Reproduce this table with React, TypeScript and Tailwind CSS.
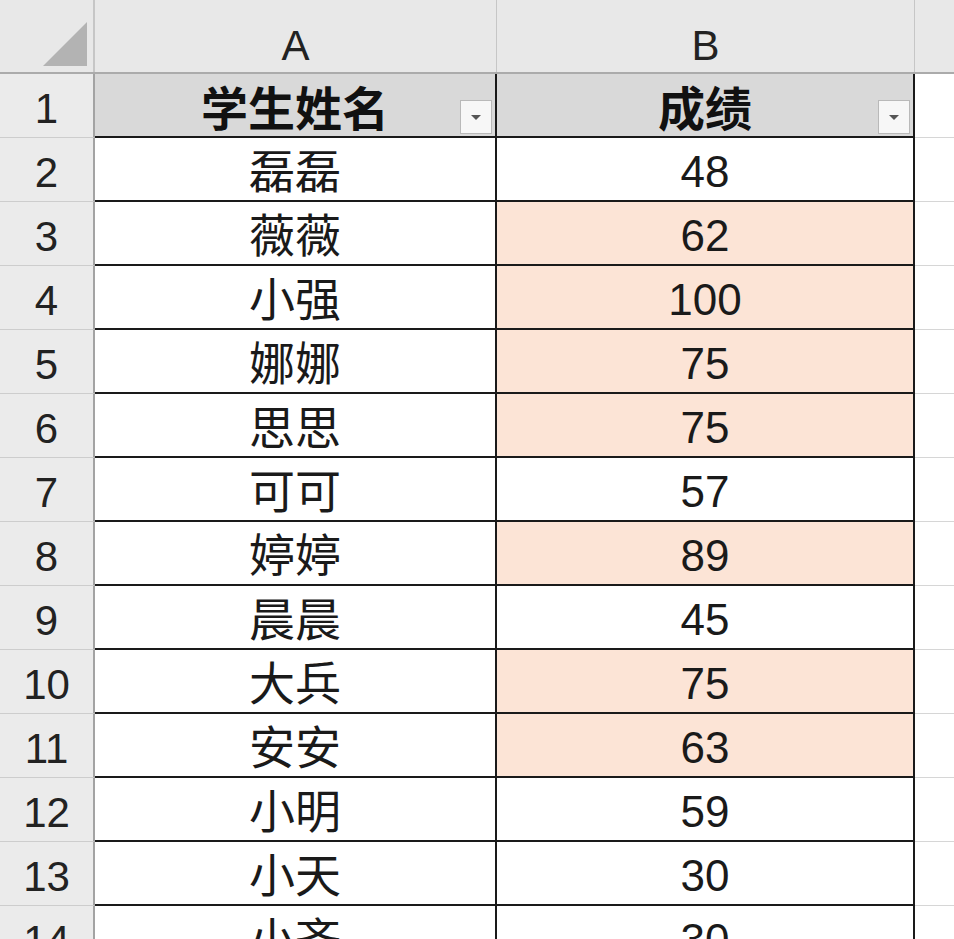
const rows: { name: string; score: number; hl: boolean }[] = [
  { name: "磊磊", score: 48, hl: false },
  { name: "薇薇", score: 62, hl: true },
  { name: "小强", score: 100, hl: true },
  { name: "娜娜", score: 75, hl: true },
  { name: "思思", score: 75, hl: true },
  { name: "可可", score: 57, hl: false },
  { name: "婷婷", score: 89, hl: true },
  { name: "晨晨", score: 45, hl: false },
  { name: "大兵", score: 75, hl: true },
  { name: "安安", score: 63, hl: true },
  { name: "小明", score: 59, hl: false },
  { name: "小天", score: 30, hl: false },
  { name: "小齐", score: 30, hl: false },
];

const font = { fontFamily: '"Liberation Sans", "Noto Sans CJK SC", sans-serif' };

function FilterButton() {
  return (
    <div className="absolute right-[3px] bottom-[2px] flex h-[34px] w-[32px] items-center justify-center border border-[#b9b9b9] bg-[#f7f7f7]">
      <svg width="12" height="7" viewBox="0 0 12 7">
        <path d="M1 1h10L6 6z" fill="#555" />
      </svg>
    </div>
  );
}

function RowHead({ n }: { n: number }) {
  return (
    <div className="flex h-[64px] w-[95px] shrink-0 items-center justify-center border-r-2 border-b border-r-[#a3a3a3] border-b-[#cdcdcd] bg-[#ebebeb] pt-[6px] text-[42px] text-[#222]">
      {n}
    </div>
  );
}

export default function App() {
  return (
    <div className="h-[939px] w-[954px] overflow-hidden bg-white" style={font}>
      {/* column letters */}
      <div className="flex h-[74px] border-b-2 border-[#ababab] bg-[#e8e8e8]">
        <div className="flex w-[95px] shrink-0 items-end justify-end border-r-2 border-[#c6c6c6] pr-[6px] pb-[6px]">
          <svg width="44" height="44" viewBox="0 0 44 44">
            <path d="M44 0V44H0z" fill="#b3b3b3" />
          </svg>
        </div>
        <div className="flex w-[402px] shrink-0 items-center justify-center border-r border-[#c6c6c6] pt-[18px] text-[42px] text-[#222]">
          A
        </div>
        <div className="flex w-[418px] shrink-0 items-center justify-center border-r border-[#c6c6c6] pt-[18px] text-[42px] text-[#222]">
          B
        </div>
        <div className="flex-1" />
      </div>

      {/* header row */}
      <div className="flex">
        <RowHead n={1} />
        <div className="relative flex h-[64px] w-[402px] shrink-0 items-center justify-center border-r-2 border-b-2 border-[#1a1a1a] bg-[#d9d9d9] pt-[10px] text-[47px] font-bold text-[#111]">
          学生姓名
          <FilterButton />
        </div>
        <div className="relative flex h-[64px] w-[418px] shrink-0 items-center justify-center border-r-2 border-b-2 border-[#1a1a1a] bg-[#d9d9d9] pt-[10px] text-[47px] font-bold text-[#111]">
          成绩
          <FilterButton />
        </div>
        <div className="h-[64px] flex-1 border-b border-[#d6d6d6]" />
      </div>

      {rows.map((r, i) => (
        <div key={i} className="flex">
          <RowHead n={i + 2} />
          <div className="flex h-[64px] w-[402px] shrink-0 items-center justify-center border-r-2 border-b-2 border-[#1a1a1a] pt-[6px] text-[46px] text-[#1a1a1a]">
            {r.name}
          </div>
          <div
            className={`flex h-[64px] w-[418px] shrink-0 items-center justify-center border-r-2 border-b-2 border-[#1a1a1a] pt-[6px] text-[44px] text-[#1a1a1a] ${
              r.hl ? "bg-[#fce4d6]" : "bg-white"
            }`}
          >
            {r.score}
          </div>
          <div className="h-[64px] flex-1 border-b border-[#d6d6d6]" />
        </div>
      ))}
    </div>
  );
}
